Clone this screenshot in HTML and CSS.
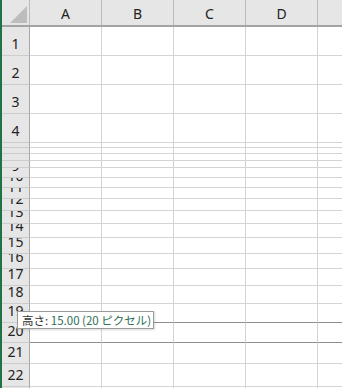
FILE: index.html
```html
<!DOCTYPE html>
<html lang="ja">
<head>
  <meta charset="UTF-8" />
  <meta name="viewport" content="width=device-width, initial-scale=1.0"/>
  <title>Sheet1</title>
  <link rel="stylesheet" href="styles.css">
</head>
<body>

  <div class="sheet">
    <div class="col-headers">
      <div class="corner">
        <svg width="17" height="17" viewBox="0 0 17 17"><polygon points="0,17 17,17 17,0" fill="#bdbdbd"/></svg>
      </div>
      <div class="col-head">A</div>
      <div class="col-head">B</div>
      <div class="col-head">C</div>
      <div class="col-head">D</div>
      <div class="col-head"></div>
    </div>
    <div id="rows" class="rows"></div>

    <!-- row height tooltip while dragging -->
    <div class="tooltip">高さ: <span class="num">15.00 (20 ピクセル)</span></div>
  </div>

  <script>
    // row heights in px, bottom gridline included
    const heights = [29, 29, 29, 29, 5, 6, 7, 7, 10, 10, 11, 12, 13, 14, 16, 15, 17, 18, 19, 20, 21, 23, 22];
    const rows = document.getElementById('rows');

    heights.forEach((h, i) => {
      const row = document.createElement('div');
      row.className = 'row';
      if (i === 18 || i === 19) row.classList.add('drag');
      row.style.height = h + 'px';

      const head = document.createElement('div');
      head.className = 'row-head';
      head.innerHTML = '<span>' + (i + 1) + '</span>';
      row.appendChild(head);

      for (let c = 0; c < 5; c++) {
        const cell = document.createElement('div');
        cell.className = 'cell';
        row.appendChild(cell);
      }
      rows.appendChild(row);
    });
  </script>

</body>
</html>
```

FILE: styles.css
```css
body {
  margin: 0;
  background-color: #ffffff;
  font-family: "Noto Sans", "Noto Sans CJK JP", sans-serif;
  overflow: hidden;
}

.sheet {
  position: relative;
  height: 388px;
  border-left: 2px solid #217346;
  overflow: hidden;
}

/* column headers */
.col-headers {
  display: flex;
  height: 27px;
  background-color: #e6e6e6;
  border-bottom: 2px solid #a3a3a3;
  box-sizing: border-box;
}

.corner {
  flex: 0 0 28px;
  box-sizing: border-box;
  border-right: 1px solid #bcbcbc;
  display: flex;
  justify-content: flex-end;
  align-items: flex-end;
  padding: 0 2px 2px 0;
}

.corner svg {
  display: block;
}

.col-head {
  flex: 0 0 72px;
  box-sizing: border-box;
  border-right: 1px solid #bcbcbc;
  text-align: center;
  font-size: 14px;
  line-height: 25px;
  padding-top: 1px;
  color: #222;
}

/* rows */
.row {
  display: flex;
}

.row-head {
  flex: 0 0 28px;
  box-sizing: border-box;
  background-color: #e6e6e6;
  border-right: 1px solid #a8a8a8;
  border-bottom: 1px solid #cdcdcd;
  display: flex;
  flex-direction: column;
  justify-content: flex-end;
  align-items: center;
  overflow: hidden;
  font-size: 14px;
  line-height: 16px;
  padding-bottom: 3px;
  color: #222;
}

.row-head span {
  flex: none;
}

.cell {
  flex: 0 0 72px;
  box-sizing: border-box;
  border-right: 1px solid #d4d4d4;
  border-bottom: 1px solid #d4d4d4;
}

.row.drag .cell {
  border-bottom-color: #8e8e8e;
}

/* tooltip */
.tooltip {
  position: absolute;
  left: 15px;
  top: 311px;
  width: 137px;
  height: 18px;
  box-sizing: border-box;
  background-color: #fff;
  border: 1px solid #9a9a9a;
  box-shadow: 1px 1px 2px rgba(0,0,0,0.15);
  font-family: "Noto Sans CJK JP", sans-serif;
  font-size: 11.5px;
  line-height: 16px;
  padding-left: 4px;
  color: #333;
  white-space: nowrap;
}

.tooltip .num {
  color: #2e6e52;
}
```
